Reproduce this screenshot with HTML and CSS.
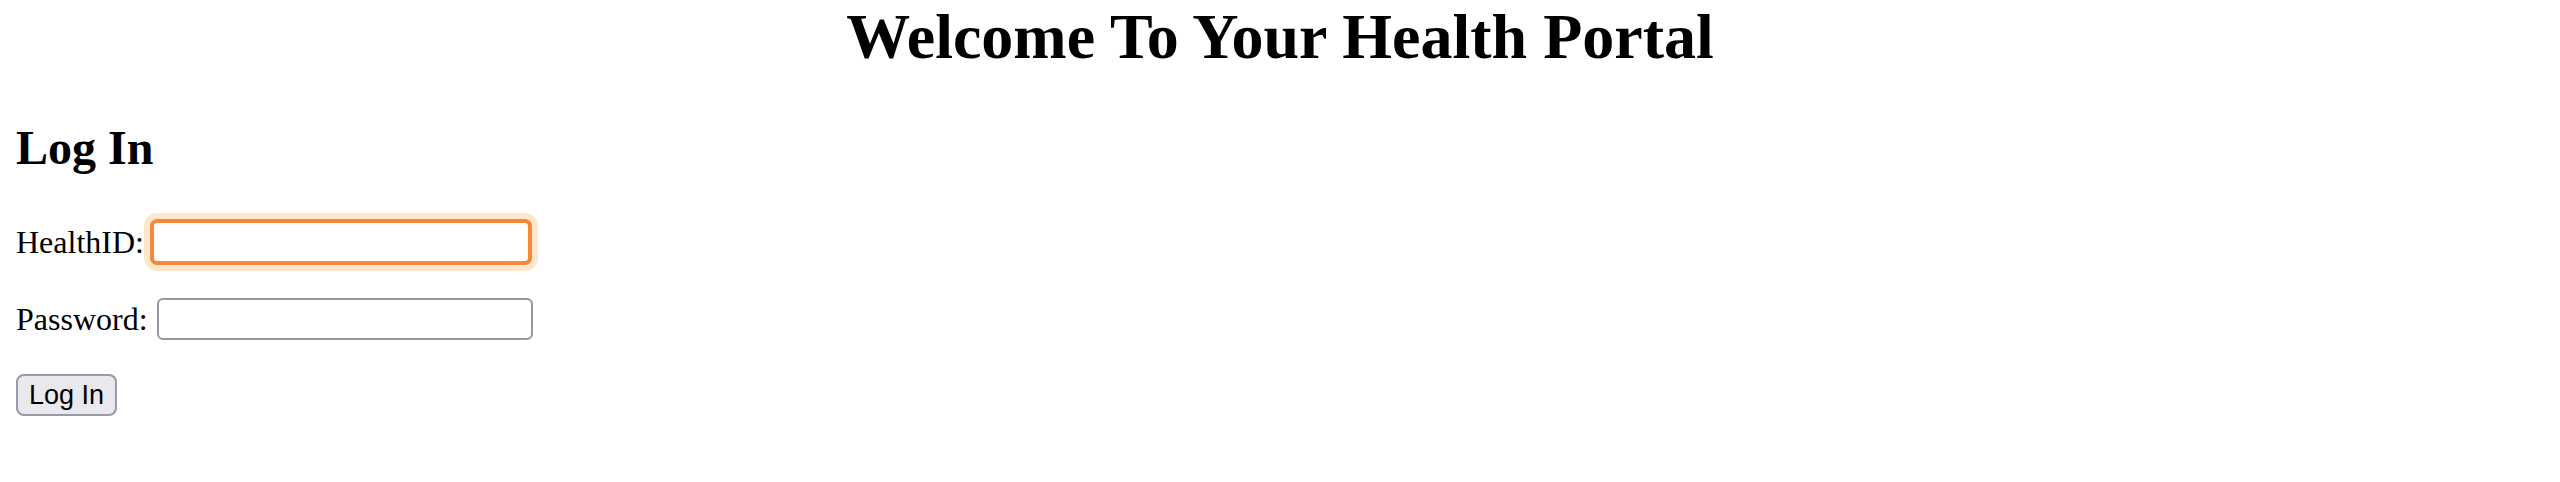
FILE: index.html
```html
<!DOCTYPE html>
<html lang="en">
<head>
<meta charset="utf-8">
<title>Health Portal</title>
<link rel="stylesheet" href="styles.css">
</head>
<body>
<h1 class="title">Welcome To Your Health Portal</h1>
<h2 class="subtitle">Log In</h2>
<form class="login">
  <div class="row row-id">
    <label class="label" for="hid">HealthID:</label>
    <input class="field field-focus" id="hid" type="text">
  </div>
  <div class="row row-pw">
    <label class="label" for="pw">Password:</label>
    <input class="field" id="pw" type="password">
  </div>
  <div class="row row-btn">
    <button class="btn" type="button">Log In</button>
  </div>
</form>
</body>
</html>
```
FILE: styles.css
```css
html, body {
  background: #ffffff;
}
body {
  margin: 0;
  padding: 0 16px;
  font-family: "Liberation Serif", "Times New Roman", serif;
  color: #000;
}
.title {
  margin: 0 0 46px;
  font-size: 64px;
  font-weight: bold;
  text-align: center;
  line-height: normal;
}
.subtitle {
  margin: 0;
  font-size: 48px;
  font-weight: bold;
  line-height: normal;
}
.login {
  margin: 0;
}
.row {
  display: flex;
  align-items: center;
}
.row-id {
  margin-top: 44px;
}
.row-pw {
  margin-top: 33px;
}
.row-btn {
  margin-top: 34px;
}
.label {
  font-size: 32px;
  line-height: normal;
}
.field {
  box-sizing: border-box;
  height: 42px;
  width: 376px;
  margin: 0 0 0 9px;
  padding: 0 6px;
  border: 2px solid #9896a3;
  border-radius: 6px;
  background: #fff;
  font-family: "Liberation Sans", Arial, sans-serif;
  font-size: 26px;
  outline: none;
}
.field-focus {
  height: 46px;
  width: 382px;
  margin-left: 6px;
  border: 4px solid #f5883a;
  border-radius: 7px;
  box-shadow: 0 0 0 6px #fee7cb;
}
.btn {
  box-sizing: border-box;
  height: 42px;
  margin: 0;
  padding: 0 11px;
  border: 2px solid #9a99a6;
  border-radius: 8px;
  background: #e9e9ed;
  color: #000;
  font-family: "Liberation Sans", Arial, sans-serif;
  font-size: 27px;
}
```
